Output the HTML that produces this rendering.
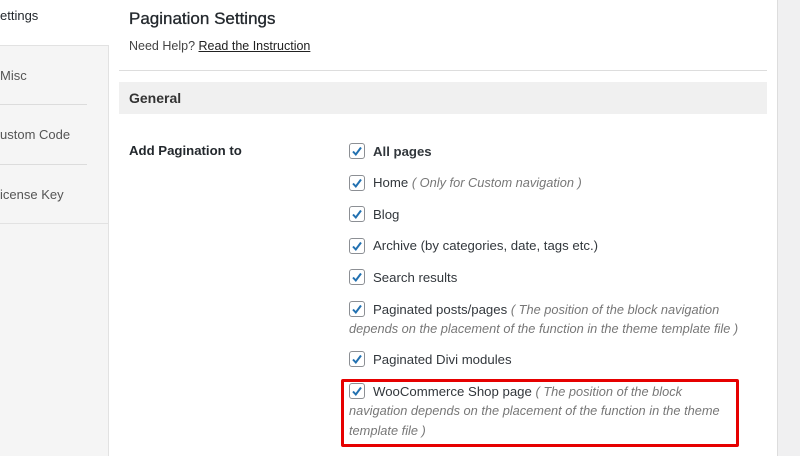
<!DOCTYPE html>
<html><head><style>
html,body{margin:0;width:800px;height:456px;overflow:hidden}
body{background:#fff;font-family:"Liberation Sans",sans-serif;color:#23282d;position:relative}
.a{position:absolute;white-space:nowrap}
.side{position:absolute;left:0;top:45px;width:108px;height:411px;background:#f5f5f5;border-right:1px solid #e2e2e2;border-top:1px solid #e2e2e2}
.div{position:absolute;left:0;width:87px;height:1px;background:#dcdcdc}
.st{font-size:13px;color:#555}
.cb{position:absolute;width:14px;height:14px;border:1px solid #8c8f94;border-radius:3px;background:#fff}
.cb svg{position:absolute;left:0;top:0}
.lbl{font-size:13.2px;color:#32373c}
.i{font-style:italic;color:#777;font-size:12.8px}
</style></head><body>
<div class="side"></div>
<div class="div" style="top:104px"></div>
<div class="div" style="top:164px"></div>
<div style="position:absolute;left:0;top:223px;width:108px;height:1px;background:#e2e2e2"></div>
<div class="a st" style="left:0;top:8px;color:#23282d">ettings</div>
<div class="a st" style="left:0;top:68px">Misc</div>
<div class="a st" style="left:0;top:127px">ustom Code</div>
<div class="a st" style="left:0;top:187px">icense Key</div>
<div style="position:absolute;left:777px;top:0;width:23px;height:456px;background:#f0f0f1;border-left:1px solid #ddd"></div>
<div class="a" style="left:129px;top:9px;font-size:17px;color:#23282d;-webkit-text-stroke:0.3px #23282d">Pagination Settings</div>
<div class="a" style="left:129px;top:39px;font-size:12.5px;color:#444">Need Help? <span style="text-decoration:underline;color:#222">Read the Instruction</span></div>
<div style="position:absolute;left:119px;top:70px;width:648px;height:1px;background:#ddd"></div>
<div style="position:absolute;left:119px;top:82px;width:648px;height:32px;background:#f0f0f0"></div>
<div class="a" style="left:129px;top:90px;font-size:14px;font-weight:bold;color:#333">General</div>
<div class="a" style="left:129px;top:143px;font-size:13.2px;font-weight:bold;color:#23282d">Add Pagination to</div>

<div class="cb" style="left:349px;top:143px"><svg width="14" height="14"><path d="M3 7.5l2.8 3L11 3.5" stroke="#2271b1" stroke-width="2" fill="none"/></svg></div>
<div class="a lbl" style="left:373px;top:144px;font-weight:bold">All pages</div>
<div class="cb" style="left:349px;top:175px"><svg width="14" height="14"><path d="M3 7.5l2.8 3L11 3.5" stroke="#2271b1" stroke-width="2" fill="none"/></svg></div>
<div class="a lbl" style="left:373px;top:175px">Home <span class="i">( Only for Custom navigation )</span></div>
<div class="cb" style="left:349px;top:206px"><svg width="14" height="14"><path d="M3 7.5l2.8 3L11 3.5" stroke="#2271b1" stroke-width="2" fill="none"/></svg></div>
<div class="a lbl" style="left:373px;top:207px">Blog</div>
<div class="cb" style="left:349px;top:238px"><svg width="14" height="14"><path d="M3 7.5l2.8 3L11 3.5" stroke="#2271b1" stroke-width="2" fill="none"/></svg></div>
<div class="a lbl" style="left:373px;top:238px">Archive (by categories, date, tags etc.)</div>
<div class="cb" style="left:349px;top:269px"><svg width="14" height="14"><path d="M3 7.5l2.8 3L11 3.5" stroke="#2271b1" stroke-width="2" fill="none"/></svg></div>
<div class="a lbl" style="left:373px;top:270px">Search results</div>
<div class="cb" style="left:349px;top:301px"><svg width="14" height="14"><path d="M3 7.5l2.8 3L11 3.5" stroke="#2271b1" stroke-width="2" fill="none"/></svg></div>
<div class="a lbl" style="left:373px;top:302px">Paginated posts/pages <span class="i">( The position of the block navigation</span></div>
<div class="a i" style="left:349px;top:321px">depends on the placement of the function in the theme template file )</div>
<div class="cb" style="left:349px;top:351px"><svg width="14" height="14"><path d="M3 7.5l2.8 3L11 3.5" stroke="#2271b1" stroke-width="2" fill="none"/></svg></div>
<div class="a lbl" style="left:373px;top:352px">Paginated Divi modules</div>
<div class="cb" style="left:349px;top:383px"><svg width="14" height="14"><path d="M3 7.5l2.8 3L11 3.5" stroke="#2271b1" stroke-width="2" fill="none"/></svg></div>
<div class="a lbl" style="left:373px;top:384px">WooCommerce Shop page <span class="i">( The position of the block</span></div>
<div class="a i" style="left:349px;top:403px">navigation depends on the placement of the function in the theme</div>
<div class="a i" style="left:349px;top:423px">template file )</div>
<div style="position:absolute;left:341px;top:379px;width:392px;height:62px;border:3px solid #e60000;border-radius:2px"></div>
</body></html>
